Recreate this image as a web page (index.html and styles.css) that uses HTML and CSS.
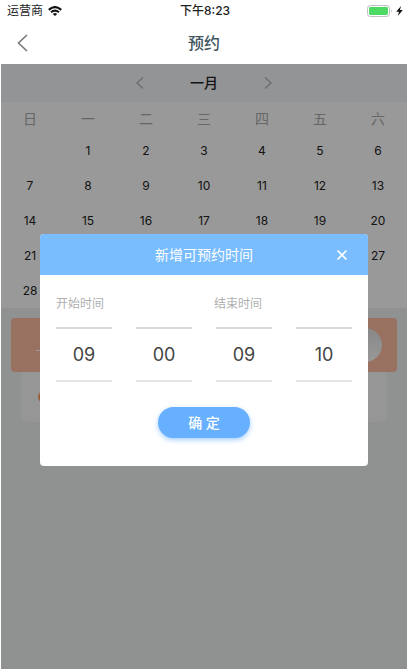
FILE: index.html
```
<!DOCTYPE html>
<html lang="zh-CN">
<head>
<meta charset="UTF-8" />
<meta name="viewport" content="width=device-width, initial-scale=1.0"/>
<title>预约</title>
<link rel="stylesheet" href="styles.css">
</head>
<body>

<div class="app">
  <!-- Status bar -->
  <div class="status">
    <div class="status__left">
      <span>运营商</span>
      <svg class="status__wifi" viewBox="0 0 14 10" width="14" height="10" aria-hidden="true">
        <path d="M0.8 3.8 Q7 -1.6 13.2 3.8" fill="none" stroke="#111" stroke-width="2.2"/>
        <path d="M3 6.3 Q7 2.9 11 6.3" fill="none" stroke="#111" stroke-width="2"/>
        <path d="M4.8 7.9 Q7 6 9.2 7.9 L7 10 Z" fill="#111"/>
      </svg>
    </div>
    <span class="status__time">下午8:23</span>
    <div class="status__right">
      <svg viewBox="0 0 26 12" width="26" height="12" aria-hidden="true">
        <rect x="0.5" y="0.5" width="22" height="11" rx="2.8" fill="#fff" stroke="#c0c0c0"/>
        <rect x="2" y="2" width="19" height="8" rx="1.4" fill="#4cd964"/>
        <path d="M24 4 Q25.6 6 24 8 Z" fill="#b5b5b5"/>
      </svg>
      <svg viewBox="0 0 6 9" width="7" height="10" aria-hidden="true">
        <path d="M4.4 0 L0 5.2 H2.6 L1.4 9 L6 3.7 H3.4 Z" fill="#111"/>
      </svg>
    </div>
  </div>

  <header class="navbar">
    <button class="navbar__back" type="button" aria-label="返回">
      <svg viewBox="0 0 11 18" width="11" height="18"><path d="M10 1 L1.5 9 L10 17" fill="none" stroke="#777" stroke-width="1.6"/></svg>
    </button>
    <h1 class="navbar__title">预约</h1>
  </header>

  <main class="content">
    <div class="month">
      <button class="month__arrow" type="button" aria-label="上个月">
        <svg viewBox="0 0 8 12" width="8" height="12"><path d="M7 0.5 L1 6 L7 11.5" fill="none" stroke="#b4b4b4" stroke-width="1.3"/></svg>
      </button>
      <h2 class="month__name">一月</h2>
      <button class="month__arrow" type="button" aria-label="下个月">
        <svg viewBox="0 0 8 12" width="8" height="12"><path d="M1 0.5 L7 6 L1 11.5" fill="none" stroke="#b4b4b4" stroke-width="1.3"/></svg>
      </button>
    </div>

    <table class="calendar">
      <thead>
        <tr><th>日</th><th>一</th><th>二</th><th>三</th><th>四</th><th>五</th><th>六</th></tr>
      </thead>
      <tbody>
        <tr><td></td><td>1</td><td>2</td><td>3</td><td>4</td><td>5</td><td>6</td></tr>
        <tr><td>7</td><td>8</td><td>9</td><td>10</td><td>11</td><td>12</td><td>13</td></tr>
        <tr><td>14</td><td>15</td><td>16</td><td>17</td><td>18</td><td>19</td><td>20</td></tr>
        <tr><td>21</td><td>22</td><td>23</td><td>24</td><td>25</td><td>26</td><td>27</td></tr>
        <tr><td>28</td><td>29</td><td>30</td><td>31</td><td></td><td></td><td></td></tr>
      </tbody>
    </table>

    <section class="slots">
      <div class="slots__head">
        <span class="slots__dash"></span>
        <span class="slots__knob"></span>
      </div>
      <div class="slots__body">
        <span class="slots__dot"></span>
      </div>
    </section>

    <!-- Dialog over the calendar -->
    <div class="overlay">
      <form class="dialog" role="dialog" aria-labelledby="dialog-title">
        <div class="dialog__header">
          <h2 class="dialog__title" id="dialog-title">新增可预约时间</h2>
          <button class="dialog__close" type="button" aria-label="关闭">
            <svg viewBox="0 0 12 12" width="12" height="12"><path d="M1.5 1.5 L10.5 10.5 M10.5 1.5 L1.5 10.5" fill="none" stroke="#fff" stroke-width="1.7"/></svg>
          </button>
        </div>
        <div class="dialog__body">
          <div class="labels">
            <label for="start-hour">开始时间</label>
            <label for="end-hour">结束时间</label>
          </div>
          <div class="picker">
            <select class="picker__col" id="start-hour"><option>09</option></select>
            <select class="picker__col" aria-label="开始分钟"><option>00</option></select>
            <select class="picker__col" id="end-hour"><option>09</option></select>
            <select class="picker__col" aria-label="结束分钟"><option>10</option></select>
          </div>
          <button class="confirm" type="button">确 定</button>
        </div>
      </form>
    </div>
  </main>
</div>

</body>
</html>
```
FILE: styles.css
```
* {
  box-sizing: border-box;
}

body {
  margin: 0;
  background: #fff;
  font-family: Inter, "Noto Sans CJK SC", sans-serif;
  color: #222;
}

h1, h2 {
  margin: 0;
}

button {
  padding: 0;
  border: none;
  background: none;
  font-family: inherit;
  cursor: pointer;
}

svg {
  display: block;
}

.app {
  display: flex;
  flex-direction: column;
  min-height: 100vh;
  padding-left: 1px;
}

/* Status bar */
.status {
  display: grid;
  grid-template-columns: 1fr auto 1fr;
  align-items: center;
  height: 22px;
  padding: 0 4px 0 6px;
  font-size: 12px;
  line-height: 22px;
}

.status__left,
.status__right {
  display: flex;
  align-items: center;
  gap: 5px;
}

.status__right {
  justify-content: flex-end;
  gap: 3px;
}

.status__time {
  font-weight: 500;
}

/* Navigation bar */
.navbar {
  display: grid;
  grid-template-columns: 48px 1fr 48px;
  align-items: center;
  height: 42px;
}

.navbar__back {
  display: flex;
  align-items: center;
  height: 42px;
  padding-left: 16px;
}

.navbar__title {
  font-size: 16px;
  font-weight: 500;
  line-height: 24px;
  text-align: center;
  color: #3f5560;
}

.content {
  position: relative;
  flex: 1;
  background: #eef3f0;
}

/* Calendar */
.month {
  display: flex;
  justify-content: center;
  align-items: center;
  gap: 42px;
  height: 38px;
  background: #f5f7fa;
}

.month__arrow {
  padding: 8px 4px;
}

.month__name {
  font-size: 14px;
  font-weight: 500;
  line-height: 20px;
}

.calendar {
  width: 100%;
  table-layout: fixed;
  border-collapse: collapse;
  background: #fff;
  text-align: center;
}

.calendar th {
  height: 31px;
  padding: 0;
  font-size: 14px;
  font-weight: 400;
  color: #aaa;
}

.calendar td {
  height: 35px;
  padding: 0;
  font-size: 12px;
}

/* Slots */
.slots {
  padding: 10px;
}

.slots__head {
  display: flex;
  justify-content: space-between;
  align-items: center;
  height: 54px;
  padding: 0 15px 0 25px;
  border-radius: 4px;
  background: #ffbca0;
}

.slots__dash {
  width: 12px;
  height: 1px;
  margin-top: 10px;
  background: #fff;
}

.slots__knob {
  width: 34px;
  height: 34px;
  border-radius: 50%;
  background: linear-gradient(#e2e2e2, #fff);
}

.slots__body {
  display: flex;
  align-items: center;
  height: 50px;
  margin: 0 10px;
  padding-left: 17px;
  border-radius: 0 0 6px 6px;
  background: #fafafa;
}

.slots__dot {
  width: 12px;
  height: 12px;
  border-radius: 50%;
  background: #ff9a60;
}

/* Dialog */
.overlay {
  position: absolute;
  inset: 0;
  padding: 170px 39px 0;
  background: rgba(0, 0, 0, .4);
}

.dialog {
  overflow: hidden;
  border-radius: 4px;
  background: #fff;
}

.dialog__header {
  display: grid;
  grid-template-columns: 52px 1fr 52px;
  align-items: center;
  height: 41px;
  background: #7abdff;
}

.dialog__title {
  grid-column: 2;
  font-size: 14px;
  font-weight: 400;
  line-height: 20px;
  text-align: center;
  color: #fff;
}

.dialog__close {
  display: flex;
  justify-content: center;
  padding: 8px;
}

.dialog__body {
  padding: 19px 16px 28px;
}

.labels {
  display: grid;
  grid-template-columns: 1fr 1fr;
  gap: 20px;
  font-size: 12px;
  line-height: 20px;
  color: #b0b0b0;
}

.picker {
  display: grid;
  grid-template-columns: repeat(4, 1fr);
  gap: 24px;
  margin-top: 13px;
}

.picker__col {
  appearance: none;
  width: 100%;
  height: 55px;
  padding: 0;
  border: none;
  border-top: 2px solid #d8d8d8;
  border-bottom: 2px solid #e6e6e6;
  border-radius: 0;
  background: none;
  font-family: inherit;
  font-size: 18px;
  text-align: center;
  text-align-last: center;
  color: #444;
}

.confirm {
  display: block;
  width: 92px;
  height: 31px;
  margin: 25px auto 0;
  border-radius: 16px;
  background: #66b0ff;
  box-shadow: 0 2px 5px rgba(102, 176, 255, .6);
  font-size: 14px;
  font-weight: 500;
  line-height: 31px;
  color: #fff;
}
```
